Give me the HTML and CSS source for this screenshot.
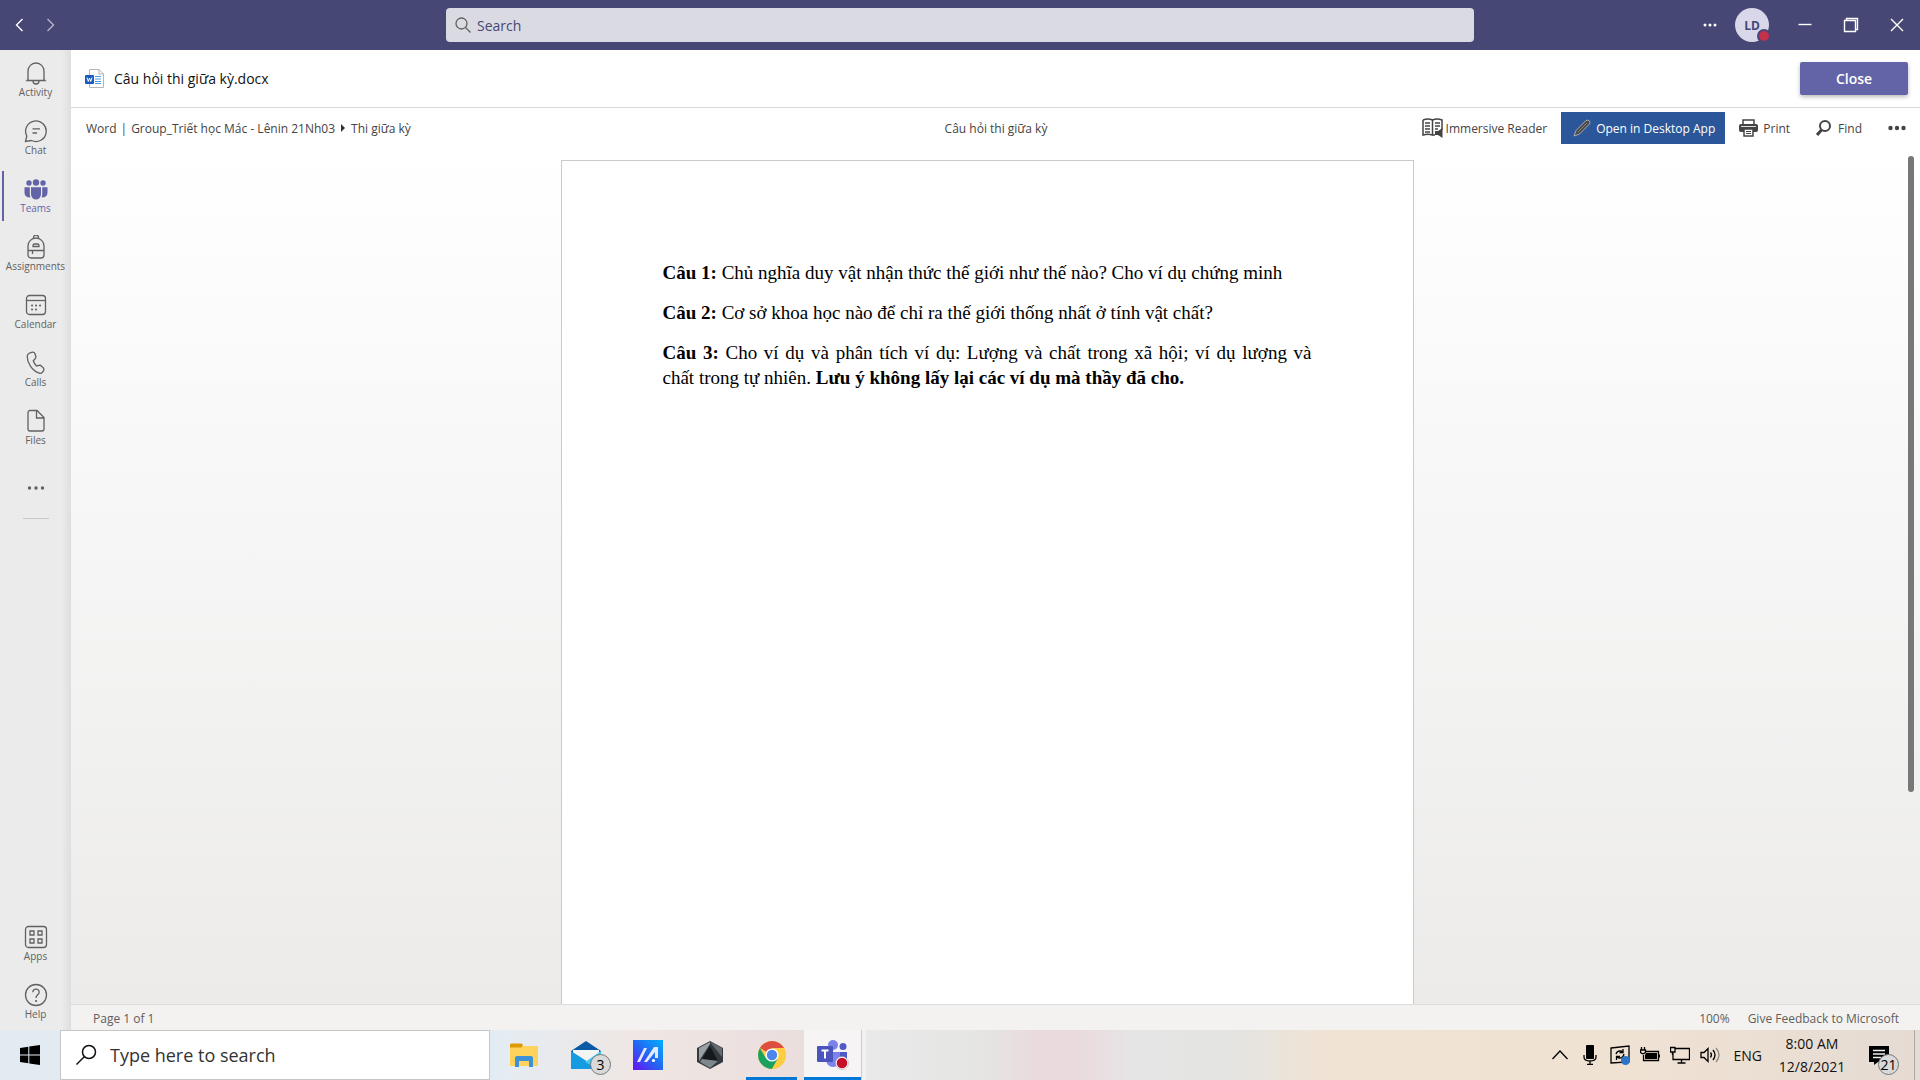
FILE: index.html
```html
<!DOCTYPE html>
<html lang="vi">
<head>
<meta charset="utf-8">
<title>Câu hỏi thi giữa kỳ.docx</title>
<link rel="stylesheet" href="styles.css">
</head>
<body>
<div class="screen">
  <header class="titlebar">
    <div class="history">
      <button class="bare" aria-label="Back"><svg width="16" height="16" viewBox="0 0 16 16"><path d="M10.500 2L4.500 8L10.500 14"/></svg></button>
      <button class="bare dim" aria-label="Forward"><svg width="16" height="16" viewBox="0 0 16 16"><path d="M5.500 2L11.500 8L5.500 14"/></svg></button>
    </div>
    <label class="search">
      <svg width="18" height="18" viewBox="0 0 18 18"><circle cx="7.500" cy="7.500" r="5.500"/><path d="M11.500 11.500L16.500 16.500"/></svg>
      <input type="text" placeholder="Search" aria-label="Search">
    </label>
    <div class="window-tools">
      <button class="bare" aria-label="More"><svg class="solid" width="14" height="14" viewBox="0 0 14 14"><circle cx="2" cy="7" r="1.500"/><circle cx="7" cy="7" r="1.500"/><circle cx="12" cy="7" r="1.500"/></svg></button>
      <button class="bare avatar" aria-label="Profile">LD<span class="presence"></span></button>
      <button class="bare" aria-label="Minimize"><svg width="16" height="16" viewBox="0 0 16 16"><path d="M1.500 7.500H14.500"/></svg></button>
      <button class="bare" aria-label="Restore"><svg width="16" height="16" viewBox="0 0 16 16"><path d="M1.500 3.500H12.500V14.500H1.500ZM3.500 3.500V1.500H14.500V12.500H12.500"/></svg></button>
      <button class="bare" aria-label="Close window"><svg width="16" height="16" viewBox="0 0 16 16"><path d="M2 2L14 14M14 2L2 14"/></svg></button>
    </div>
  </header>

  <div class="middle">
    <nav class="rail">
      <a class="rail-item" href="#"><svg width="24" height="24" viewBox="0 0 24 24"><path d="M4 18.500V10a8 8 0 0 1 16 0V18.500L21 19.500H3ZM9 20a3 3 0 0 0 6 0"/></svg>Activity</a>
      <a class="rail-item" href="#"><svg width="24" height="24" viewBox="0 0 24 24"><path d="M1.500 22.500L2.800 17A10.300 10.300 0 1 1 7.500 21.500ZM8.500 9.800H16M8.500 14H13"/></svg>Chat</a>
      <a class="rail-item active" href="#"><svg class="solid" width="24" height="24" viewBox="0 0 24 24"><circle cx="5" cy="6" r="2.700"/><circle cx="12" cy="5.500" r="3.200"/><circle cx="19" cy="6" r="2.700"/><path d="M7 10.200H17V17a5 5.500 0 0 1-10 0ZM.500 10.200H5.800V17Q5.800 19 6.500 20.500Q.500 20.500 .500 15.500ZM23.500 10.200H18.200V17Q18.200 19 17.500 20.500Q23.500 20.500 23.500 15.500Z"/></svg>Teams</a>
      <a class="rail-item" href="#"><svg width="24" height="24" viewBox="0 0 24 24"><path d="M4 11a8 8 0 0 1 16 0V20a3 3 0 0 1-3 3H7a3 3 0 0 1-3-3ZM9.500 3.500V2.500a2.500 2.500 0 0 1 5 0V3.500M4 15.500H20M8.500 15.500V19M9 11.500V10.500q0-1.500 1.500-1.500H13.500q1.500 0 1.500 1.500V11.500Z"/></svg>Assignments</a>
      <a class="rail-item" href="#"><svg width="24" height="24" viewBox="0 0 24 24"><rect x="2.500" y="2.500" width="19" height="19" rx="3"/><path d="M2.500 7.500H21.500"/><path class="dots" d="M8 12.500h.1M12 12.500h.1M16 12.500h.1M8 16.500h.1M12 16.500h.1"/></svg>Calendar</a>
      <a class="rail-item" href="#"><svg width="24" height="24" viewBox="0 0 24 24"><path d="M6 1.800L8.500 1.200Q10.300 1 11 2.800L11.800 5.200Q12.200 6.800 11 8L9.300 9.700Q10.200 12.700 12.500 15L15 14.300Q16.500 14 17.600 15.100L19.500 17.200Q20.500 18.500 19.500 19.900L18.200 21.500Q17 22.700 15.300 22.200C8 20 3 11.500 3.200 5Q3.500 2.600 6 1.800Z"/></svg>Calls</a>
      <a class="rail-item" href="#"><svg width="24" height="24" viewBox="0 0 24 24"><path d="M6 1.500H13L20 8.500V20a2 2 0 0 1-2 2H6a2 2 0 0 1-2-2V3.500a2 2 0 0 1 2-2ZM12.500 1.500V9H20"/></svg>Files</a>
      <a class="rail-item more" href="#" aria-label="More apps"><svg class="solid" width="24" height="24" viewBox="0 0 24 24"><circle cx="5.500" cy="12" r="1.700"/><circle cx="12" cy="12" r="1.700"/><circle cx="18.500" cy="12" r="1.700"/></svg></a>
      <hr class="rail-rule">
      <a class="rail-item push" href="#"><svg width="24" height="24" viewBox="0 0 24 24"><rect x="1.500" y="1.500" width="21" height="21" rx="3"/><path d="M6 6h4v4H6ZM14 6h4v4h-4ZM6 14h4v4H6ZM14 14h4v4h-4Z"/></svg>Apps</a>
      <a class="rail-item" href="#"><svg width="24" height="24" viewBox="0 0 24 24"><circle cx="12" cy="12" r="10.500"/><path d="M8.800 9.300C9 5 15.300 5.300 15.200 9.300C15.100 11.800 12 12 12 15"/><path class="dots" d="M12 18h.1"/></svg>Help</a>
    </nav>

    <main class="viewer">
      <div class="file-head">
        <svg width="19" height="19" viewBox="0 0 19 19"><path d="M4.500.500H14L18.500 5V18.500H4.500Z" fill="#fff" stroke="#b5b5b5"/><path d="M14 .500V5H18.500" fill="none" stroke="#b5b5b5"/><path d="M10 7.500H16M10 10H16M10 12.500H16M10 14.500H16" stroke="#4c9be8"/><rect y="6" width="9" height="9" rx="1" fill="#185abd"/><path d="M2 8.500L3.300 12.500L4.500 9L5.700 12.500L7 8.500" fill="none" stroke="#fff"/></svg>
        <h1>Câu hỏi thi giữa kỳ.docx</h1>
        <button class="close">Close</button>
      </div>
      <div class="toolbar">
        <div class="crumbs"><a href="#">Word</a><span class="bar">|</span><a href="#">Group_Triết học Mác - Lênin 21Nh03</a><svg width="6" height="8" viewBox="0 0 6 8"><path d="M1 0L5 4L1 8Z" fill="#333"/></svg><a href="#">Thi giữa kỳ</a></div>
        <div class="doc-name">Câu hỏi thi giữa kỳ</div>
        <div class="actions">
          <button class="action reader"><svg width="21" height="20" viewBox="0 0 21 20"><path d="M1 2Q6 0 10.500 2Q15 0 20 2V12M10.500 2V17Q6 15.500 1 17V2M10.500 17H13M3 5h5M3 8h5M3 11h5M3 14h5M13 5h5M13 8h5M13 11h3" fill="none" stroke="#444" stroke-width="1.500"/><path d="M13 13h3l4.500-3v10L16 17h-3Z" fill="#444"/></svg>Immersive Reader</button>
          <button class="action primary"><svg width="18" height="18" viewBox="0 0 18 18"><path d="M1 17L3 11.500L13 1.500Q15 .500 16.500 2Q17.500 3.500 16.500 5L6.500 15Z" fill="#4a4a4a" stroke="#a9adb3"/><path d="M5 13L14 4" stroke="#888"/></svg>Open in Desktop App</button>
          <button class="action"><svg width="19" height="18" viewBox="0 0 19 18"><path d="M4 5V1H15V5" fill="none" stroke="#444" stroke-width="1.500"/><rect y="5" width="19" height="8" rx="2" fill="#444"/><path d="M2 7.500H17" stroke="#ddd"/><path d="M5 10H14V17H5Z" fill="#fff" stroke="#444" stroke-width="1.500"/><path d="M7 12.500H12M7 14.500H12" stroke="#444"/></svg>Print</button>
          <button class="action find"><svg width="15" height="16" viewBox="0 0 15 16"><circle cx="9" cy="6" r="5" fill="none" stroke="#444" stroke-width="2"/><path d="M5.500 10L1 15" stroke="#444" stroke-width="3"/></svg>Find</button>
          <button class="action" aria-label="More options"><svg width="18" height="6" viewBox="0 0 18 6"><g fill="#444"><circle cx="2.500" cy="3" r="2.200"/><circle cx="9" cy="3" r="2.200"/><circle cx="15.500" cy="3" r="2.200"/></g></svg></button>
        </div>
      </div>
      <div class="canvas">
        <article class="page">
          <p><b>Câu 1:</b> Chủ nghĩa duy vật nhận thức thế giới như thế nào? Cho ví dụ chứng minh</p>
          <p><b>Câu 2:</b> Cơ sở khoa học nào để chỉ ra thế giới thống nhất ở tính vật chất?</p>
          <p><b>Câu 3:</b> Cho ví dụ và phân tích ví dụ: Lượng và chất trong xã hội; ví dụ lượng và chất&nbsp;trong tự nhiên. <b>Lưu ý không lấy lại các ví dụ mà thầy đã cho.</b></p>
        </article>
        <div class="scroll-track"><div class="scroll-thumb"></div></div>
      </div>
      <footer class="status"><span>Page 1 of 1</span><span class="zoom">100%</span><a href="#">Give Feedback to Microsoft</a></footer>
    </main>
  </div>

  <footer class="taskbar">
    <button class="start" aria-label="Start"><svg width="20" height="20" viewBox="0 0 20 20"><path d="M0 3L8.300 1.800V9.500H0ZM9.300 1.600L20 0V9.500H9.300ZM0 10.500H8.300V18.300L0 17.100ZM9.300 10.500H20V20L9.300 18.500Z"/></svg></button>
    <label class="task-search"><svg width="22" height="22" viewBox="0 0 22 22"><circle cx="14" cy="8" r="6.500"/><path d="M9.500 12.500L1.500 20.500"/></svg><input type="text" placeholder="Type here to search" aria-label="Type here to search"></label>
    <div class="apps">
      <button class="app" aria-label="File Explorer"><svg width="28" height="28" viewBox="0 0 28 28"><path d="M0 3H11L13 5H28V25H0Z" fill="#ffd35c"/><path d="M0 4Q0 2.500 1.500 2.500H11.500L13 4L11.500 6.500H0Z" fill="#dd9a00"/><path d="M5 26V17Q5 15 7 15H21Q23 15 23 17V26H19V20H9V26Z" fill="#3c92d5"/></svg></button>
      <button class="app" aria-label="Mail"><svg width="30" height="28" viewBox="0 0 30 28"><path d="M0 10L15 0L30 10V28H0Z" fill="#0c59a4"/><path d="M2 9H28V20H2Z" fill="#f4f4f4"/><path d="M0 10L17 21L30 28H0Z" fill="#159be2"/><path d="M30 10L14 21L28 28H30Z" fill="#42cdf5"/></svg><span class="badge">3</span></button>
      <button class="app" aria-label="MyASUS"><svg width="30" height="30" viewBox="0 0 30 30"><defs><linearGradient id="asus" x1="0" y1="1" x2="1" y2="0"><stop stop-color="#6a10f5"/><stop offset=".5" stop-color="#2467f2"/><stop offset="1" stop-color="#00b1ff"/></linearGradient></defs><path d="M0 0H30V30H0Z" fill="url(#asus)"/><path d="M4 22L11 8H14L7 22ZM11 22L21 7H25V18H22V12L14 22Z" fill="#e5e9ff"/><circle cx="20.500" cy="20.500" r="1.600" fill="#fff"/></svg></button>
      <button class="app" aria-label="Armoury Crate"><svg width="28" height="28" viewBox="0 0 28 28"><path d="M14 0L27 7V21L14 28L1 21V7Z" fill="#333a3f"/><path d="M14 1L3 7V20L14 3Z" fill="#9aa1a5"/><path d="M14 1L26 7V16Z" fill="#656d72"/><path d="M14 5L22 20L6 18Z" fill="#15191c"/><path d="M6 18L22 20L14 27L4 21Z" fill="#7e878c"/></svg></button>
      <button class="app running" aria-label="Chrome"><svg width="28" height="28" viewBox="0 0 28 28"><circle cx="14" cy="14" r="14" fill="#ffcd42"/><path d="M14 14L1.900 7A14 14 0 0 1 26.100 7Z" fill="#de4f42"/><path d="M1.900 7A14 14 0 0 0 14 28L20 17.500L14 14L8 17.500Z" fill="#1aa15f"/><path d="M14 7H26.100A14 14 0 0 1 14 28L20 17.500Z" fill="#ffcd42"/><circle cx="14" cy="14" r="6.600" fill="#fff"/><circle cx="14" cy="14" r="5.200" fill="#4a86ec"/></svg></button>
      <button class="app running current" aria-label="Microsoft Teams"><svg width="32" height="30" viewBox="0 0 32 30"><circle cx="26" cy="6.500" r="3.500" fill="#5059c9"/><path d="M21 12H30V21Q30 25 25 26H20Z" fill="#5059c9"/><circle cx="16" cy="5" r="5" fill="#7b83eb"/><path d="M9 12H23V20Q22 27 16 27Q10 27 9 20Z" fill="#7b83eb"/><rect y="6" width="16" height="16" rx="1" fill="#4b53bc"/><path d="M4.500 10.500H11.500M8 10.500V18.500" stroke="#fff" stroke-width="2"/><circle cx="25" cy="23" r="6.500" fill="#fff" stroke="#999" stroke-width=".5"/><circle cx="25" cy="23" r="5.300" fill="#c50f2b"/></svg></button>
    </div>
    <div class="tray">
      <button class="tray-btn" aria-label="Show hidden icons"><svg width="18" height="20" viewBox="0 0 18 20"><path d="M1.500 14L9 6L16.500 14"/></svg></button>
      <button class="tray-btn" aria-label="Microphone"><svg width="14" height="20" viewBox="0 0 14 20"><rect x="3" y="0" width="8" height="14" rx="1" fill="#000" stroke="none"/><path d="M1 10V12Q1 16 7 16Q13 16 13 12V10M7 16V19M4 19.300H10"/></svg></button>
      <button class="tray-btn" aria-label="Updates"><svg width="20" height="20" viewBox="0 0 20 20"><path d="M1 3L19 1V17L1 18ZM6 9Q7 5.500 11 6L13 7M13 4V7.500H9.500M14 9Q13 13.500 9 13L6.500 12M6.500 15V11.500H10"/><circle cx="15.500" cy="15.500" r="4.500" fill="#2a75c7" stroke="none"/></svg></button>
      <button class="tray-btn" aria-label="Battery"><svg width="20" height="20" viewBox="0 0 20 20"><path d="M6 6.500H18.500V15.500H3.500V10M19.500 9.500V12.500M1.500 2V5M4.500 2V5M.500 5H5.500V7.500Q3 10 .500 7.500Z"/><path d="M6 8H17V14H5V10Z" fill="#000" stroke="none"/></svg></button>
      <button class="tray-btn" aria-label="Network"><svg width="20" height="20" viewBox="0 0 20 20"><path d="M5 3.500H19.500V14.500H3V8M11.500 14.500V18M7.500 18H15.500M.500 2.500H5V7H.500ZM2.500 7V10"/></svg></button>
      <button class="tray-btn" aria-label="Volume"><svg width="20" height="20" viewBox="0 0 20 20"><path d="M1 7.500H4L8 3.500V16.500L4 12.500H1ZM10.500 7.500Q12.500 10 10.500 12.500M13 5Q17 10 13 15"/><path d="M16 3Q22 10 16 17" opacity=".4"/></svg></button>
      <button class="tray-btn lang">ENG</button>
      <button class="tray-btn clock"><span>8:00 AM</span><span>12/8/2021</span></button>
      <button class="tray-btn notes" aria-label="Notifications, 21 new"><svg width="20" height="20" viewBox="0 0 20 20"><path d="M0 1H20V17H9L5 20V17H0Z" fill="#000" stroke="none"/><path d="M4 5.500H16M4 9H16M4 12.500H12" stroke="#eee"/></svg><span class="badge">21</span></button>
    </div>
  </footer>
</div>
</body>
</html>
```
FILE: styles.css
```css
* { box-sizing: border-box; }
body { margin: 0; font-family: "Open Sans", "Noto Sans", sans-serif; color: #333; }
a { color: inherit; text-decoration: none; }
button { font: inherit; color: inherit; border: 0; padding: 0; background: none; }
input { font: inherit; color: inherit; border: 0; outline: 0; padding: 0; background: none; width: 100%; min-width: 0; }
svg { flex: none; display: block; }
.screen { height: 100vh; display: flex; flex-direction: column; overflow: hidden; }

.titlebar { height: 50px; flex: none; background: #464775; display: grid; grid-template-columns: 1fr 1028px 1fr; align-items: center; }
.history { display: flex; gap: 14px; padding-left: 12px; }
.bare { display: flex; align-items: center; justify-content: center; color: #fff; }
.bare svg { fill: none; stroke: currentColor; stroke-width: 1.400; }
.bare .solid { fill: currentColor; stroke: none; }
.dim { opacity: .6; }
.search { height: 34px; background: #dadae3; border-radius: 4px; display: flex; align-items: center; gap: 5px; padding: 0 8px; font-size: 14px; }
.search svg { fill: none; stroke: #616161; stroke-width: 1.300; }
.search input::placeholder { color: #464775; opacity: 1; }
.window-tools { display: flex; justify-content: flex-end; align-items: center; gap: 30px; padding-right: 15px; }
.avatar { width: 34px; height: 34px; margin: 0 -2px 0 -12px; border-radius: 50%; background: #d9d8ea; color: #464775; font-size: 12px; font-weight: 700; position: relative; }
.presence { position: absolute; right: -2px; bottom: -1px; width: 14px; height: 14px; border-radius: 50%; background: #c4314b; border: 2px solid #464775; }

.middle { flex: 1; min-height: 0; display: flex; }
.rail { width: 71px; flex: none; display: flex; flex-direction: column; background: linear-gradient(to right, #ebebeb 62px, #dedede); }
.rail-item { height: 58px; display: flex; flex-direction: column; align-items: center; padding-top: 11px; font-size: 10px; line-height: 14px; color: #616161; }
.rail-item svg { fill: none; stroke: currentColor; stroke-width: 1.300; }
.rail-item .solid { fill: currentColor; stroke: none; }
.rail-item .dots { stroke-width: 2; stroke-linecap: round; }
.active { color: #6264a7; background: linear-gradient(#6264a7, #6264a7) 2px 5px / 2px 50px no-repeat; }
.more { height: 56px; padding-top: 20px; }
.rail-rule { width: 26px; margin: 6px auto; border: 0; border-top: 1px solid #c8c8c8; }
.rail .push { margin-top: auto; }

.viewer { flex: 1; min-width: 0; display: flex; flex-direction: column; }
.file-head { height: 58px; flex: none; border-bottom: 1px solid #d9d9d9; display: flex; align-items: center; gap: 10px; padding: 0 12px 0 14px; background: #fff; }
.file-head h1 { margin: 0; flex: 1; font-size: 14px; font-weight: 500; color: #111; }
.close { width: 108px; height: 33px; background: #6264a7; color: #fff; font-size: 14px; font-weight: 600; border-radius: 2px; box-shadow: 0 2px 4px #0004; }
.toolbar { height: 42px; flex: none; display: grid; grid-template-columns: 1fr auto 1fr; align-items: center; padding: 0 14px 2px 15px; font-size: 12px; background: #fff; color: #444; }
.crumbs { display: flex; align-items: center; gap: 5px; }
.bar { margin: 0 -1px; }
.actions { display: flex; justify-content: flex-end; align-items: center; gap: 14px; }
.action { height: 32px; display: flex; align-items: center; gap: 5px; white-space: nowrap; }
.reader { gap: 3px; }
.primary { background: #2b579a; color: #fff; padding: 0 10px 0 12px; }
.find { padding: 0 12px; gap: 7px; }
.canvas { flex: 1; min-height: 0; display: flex; justify-content: center; position: relative; padding: 10px 17px 0 0; background: linear-gradient(#fff, #ecebea); }
.page { width: 853px; padding: 99px 101px 0; background: #fff; border: 1px solid #c8cacc; border-bottom: 0; font-family: "Liberation Serif", serif; font-size: 19px; line-height: 25px; color: #000; }
.page p { margin: 0 0 15px; text-align: justify; }
.scroll-track { position: absolute; top: 6px; bottom: 0; right: 6px; width: 6px; }
.scroll-thumb { height: 75%; background: #777; border-radius: 3px; }
.status { height: 26px; flex: none; display: flex; align-items: center; gap: 18px; padding: 2px 21px 0 22px; border-top: 1px solid #dcdcdc; background: #f3f2f1; font-size: 12px; color: #605e5c; }
.zoom { margin-left: auto; }

.taskbar { height: 50px; flex: none; display: flex; background: linear-gradient(to right, #e3ebf2 0, #e4ecf3 26%, #efe7e4 33%, #eadedd 42%, #e9e9e9 45%, #e5e5e4 51%, #eadade 54%, #eadade 56%, #e6e5e5 59%, #e4e4e2 64%, #f0e3d4 69%, #f0e2d3 85%, #e5dbd3 100%); }
.start { width: 60px; display: flex; align-items: center; justify-content: center; }
.task-search { width: 430px; border: 1px solid #c6c6c6; background: #fff; display: flex; align-items: center; gap: 13px; padding-left: 14px; font-size: 18px; }
.task-search svg { fill: none; stroke: #111; stroke-width: 1.500; }
.task-search input::placeholder { color: #333; opacity: 1; }
.apps { display: flex; padding-left: 8px; gap: 11px; }
.app { width: 51px; display: flex; align-items: center; justify-content: center; position: relative; border-bottom: 3px solid transparent; padding-top: 3px; }
.running { border-bottom-color: #0078d7; }
.current { width: 57px; margin-left: -4px; background: #f6f4f4; box-shadow: 1px 0 #ccc, 5px 0 #f2f1f1; }
.badge { position: absolute; right: 0; bottom: 2px; min-width: 21px; height: 21px; border: 1px solid #777; border-radius: 11px; background: #d9d9d9; color: #000; font-size: 14px; line-height: 19px; text-align: center; }
.tray { margin-left: auto; display: flex; gap: 10px; padding-right: 5px; }
.tray-btn { min-width: 20px; display: flex; align-items: center; justify-content: center; color: #111; font-size: 14px; }
.tray-btn svg { fill: none; stroke: #000; stroke-width: 1.300; }
.lang { margin-left: 4px; }
.clock { flex-direction: column; line-height: 23px; width: 80px; }
.notes { width: 53px; justify-content: flex-start; padding-left: 7px; position: relative; border-right: 1px solid #aaa; }
.notes .badge { right: 15px; bottom: 5px; }
```
